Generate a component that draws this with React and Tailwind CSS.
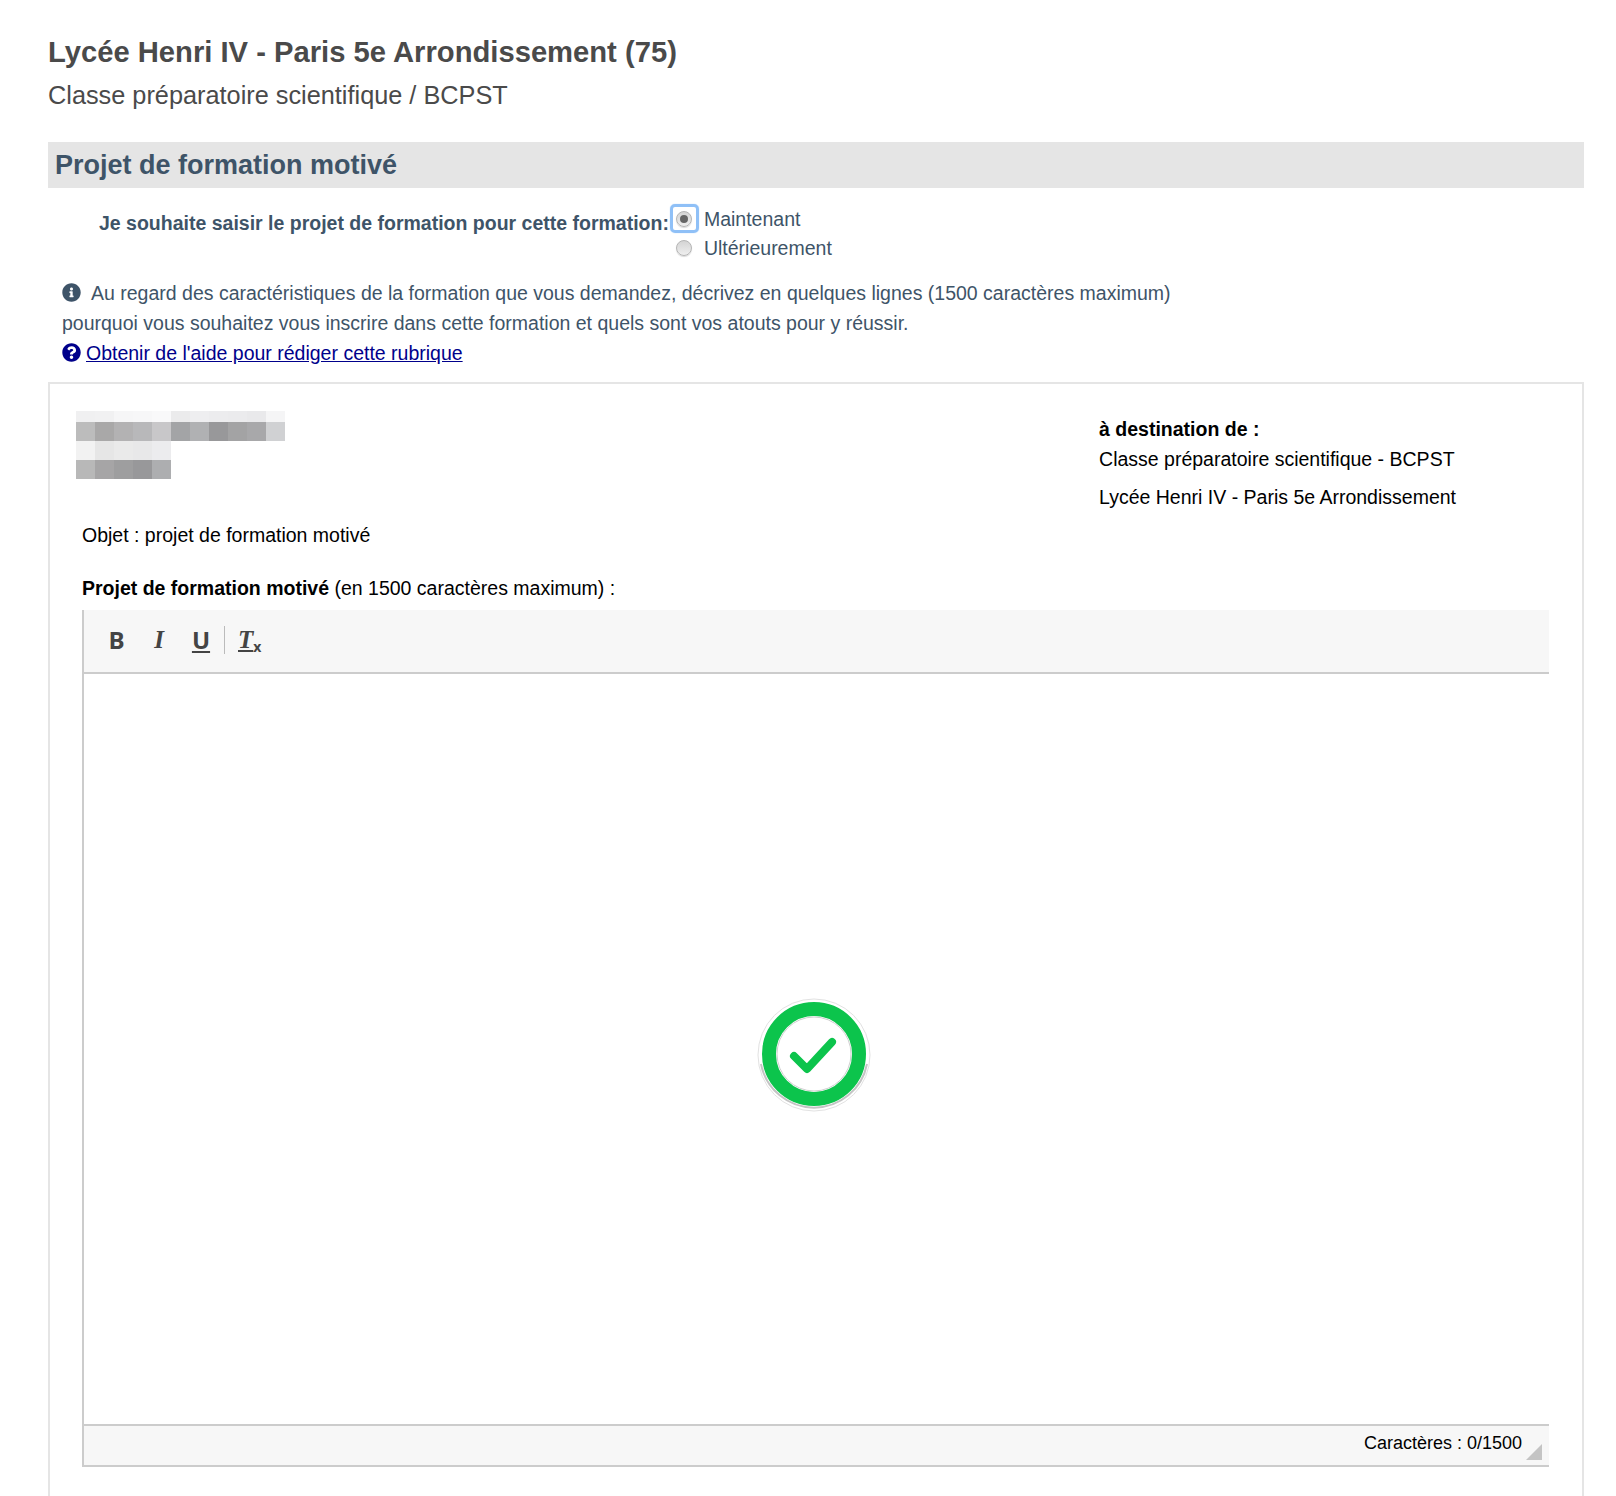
import React from 'react';
import { FaInfoCircle, FaQuestionCircle } from 'react-icons/fa';

const mosaicTop = ['#f0f0f1', '#f1f1f2', '#f6f6f7', '#f7f7f8', '#f9f9fa', '#ebebec', '#eeeef0', '#ececee', '#ebebed', '#e9e9eb', '#f5f5f6'];
const mosaicUpper = ['#bcbcbc', '#a9a8a8', '#b3b2b3', '#b8b8ba', '#c8c7c9', '#a3a4a6', '#b0b1b3', '#98989a', '#a3a3a4', '#a8a8aa', '#d0d1d3'];
const mosaicLight = ['#f2f2f2', '#e6e6e6', '#eaeaea', '#e8e8e9', '#ececee'];
const mosaicLower = ['#b8b8b8', '#a6a5a6', '#9e9e9f', '#98989a', '#adaeb0'];

function MosaicRow({ colors, height }) {
  return (
    <div className={`flex ${height}`}>
      {colors.map((c, i) => (
        <div key={i} className="w-[19px]" style={{ backgroundColor: c }} />
      ))}
    </div>
  );
}

function Radio({ checked }) {
  return (
    <span className="flex h-4 w-4 items-center justify-center rounded-full border border-[#b5b5b5] bg-gradient-to-b from-[#d4d4d4] to-[#efefef] shadow-[0_1px_1px_rgba(0,0,0,0.15)]">
      {checked && <span className="h-2 w-2 rounded-full bg-[#666]" />}
    </span>
  );
}

function SuccessBadge() {
  return (
    <svg width="116" height="116" viewBox="0 0 116 116" className="absolute left-[672px] top-[388px]">
      <circle cx="58" cy="57" r="56" fill="#fff" stroke="#e2e2e2" strokeWidth="1" />
      <path d="M 5 66 A 54 54 0 0 0 111 66" fill="none" stroke="#c4c4c4" strokeWidth="2" />
      <circle cx="58" cy="56" r="45" fill="none" stroke="#0cc44c" strokeWidth="14" />
      <circle cx="58" cy="56" r="37" fill="none" stroke="#cfcfcf" strokeWidth="1" />
      <path d="M 38 58 L 51 71 L 76 44" fill="none" stroke="#0cc44c" strokeWidth="8" strokeLinecap="round" strokeLinejoin="round" />
    </svg>
  );
}

export default function App() {
  return (
    <div className="h-[1496px] overflow-hidden bg-white pl-[48px] pr-[32px] pt-[33px] font-['Liberation_Sans',Arial,sans-serif]">
      <h1 className="text-[29.2px] font-bold leading-[38px] text-[#4a4a4a]">Lycée Henri IV - Paris 5e Arrondissement (75)</h1>
      <h2 className="mt-[7px] text-[25.3px] leading-[34px] text-[#4a4a4a]">Classe préparatoire scientifique / BCPST</h2>

      <div className="mt-[30px] flex h-[46px] items-center bg-[#e5e5e5] pl-[7px]">
        <h3 className="text-[27px] font-bold text-[#3e5468]">Projet de formation motivé</h3>
      </div>

      <div className="mt-[16px] flex items-start pl-[51px] text-[19.5px] text-[#3e5468]">
        <label className="mt-[7px] font-bold leading-[24px]">Je souhaite saisir le projet de formation pour cette formation:</label>
        <div className="flex flex-col">
          <div className="flex h-[29px] items-center">
            <span className="ml-[1px] flex h-[29px] w-[29px] items-center justify-center rounded-[5px] border-[3px] border-[#8fc0f7] shadow-[0_0_1px_#8fc0f7]">
              <Radio checked />
            </span>
            <span className="ml-[5px] mt-[2px]">Maintenant</span>
          </div>
          <div className="flex h-[30px] items-center">
            <span className="ml-[1px] flex h-[29px] w-[29px] items-center justify-center">
              <Radio />
            </span>
            <span className="ml-[5px] mt-[2px]">Ultérieurement</span>
          </div>
        </div>
      </div>

      <div className="mt-[15px] pl-[14px] text-[19.5px] leading-[30px] text-[#3e5468]">
        <p>
          <FaInfoCircle className="mr-[10px] inline-block align-[-2px] text-[19px]" />
          Au regard des caractéristiques de la formation que vous demandez, décrivez en quelques lignes (1500 caractères maximum)
        </p>
        <p>pourquoi vous souhaitez vous inscrire dans cette formation et quels sont vos atouts pour y réussir.</p>
        <a href="#aide" className="text-[#00008b] underline">
          <FaQuestionCircle className="mr-[5px] inline-block align-[-2px] text-[19px]" />
          Obtenir de l'aide pour rédiger cette rubrique
        </a>
      </div>

      <div className="relative mt-[14px] h-[1200px] border-2 border-[#e5e5e5] pl-[26px] pr-[33px] pt-[27px] text-[19.5px] text-black">
        <div className="flex justify-between">
          <div>
            <MosaicRow colors={mosaicTop} height="h-[11px]" />
            <MosaicRow colors={mosaicUpper} height="h-[19px]" />
            <MosaicRow colors={mosaicLight} height="h-[19px]" />
            <MosaicRow colors={mosaicLower} height="h-[19px]" />
          </div>
          <div className="mr-[93px] pt-[3px]">
            <p className="font-bold leading-[30px]">à destination de :</p>
            <p className="leading-[30px]">Classe préparatoire scientifique - BCPST</p>
            <p className="mt-[8px] leading-[30px]">Lycée Henri IV - Paris 5e Arrondissement</p>
          </div>
        </div>

        <p className="mt-[8px] pl-[6px] leading-[30px]">Objet : projet de formation motivé</p>
        <p className="mt-[23px] pl-[6px] leading-[30px]">
          <strong>Projet de formation motivé</strong> (en 1500 caractères maximum) :
        </p>

        <div className="relative mt-[7px] ml-[6px] flex h-[857px] flex-col border-b-2 border-l-2 border-[#cccccc]">
          <div className="flex h-[64px] shrink-0 items-center border-b-2 border-[#cccccc] bg-[#f7f7f7] pb-[2px] pl-[12px] text-[#444]">
            <span className="w-[41px] text-center font-['Open_Sans',sans-serif] text-[24px] font-bold">B</span>
            <span className="w-[44px] text-center font-['Liberation_Serif',serif] text-[25px] font-bold italic">I</span>
            <span className="w-[40px] text-center font-['Open_Sans',sans-serif] text-[24px] font-bold underline">U</span>
            <span className="ml-[3px] mr-[13px] h-[28px] w-[1px] bg-[#bbb]" />
            <span className="font-['Liberation_Serif',serif] text-[25px] font-bold italic underline">T</span>
            <span className="mt-[12px] font-['Open_Sans',sans-serif] text-[14px] font-bold">x</span>
          </div>
          <div className="flex-1" />
          <div className="relative flex h-[41px] shrink-0 items-center justify-end border-t-2 border-[#cccccc] bg-[#f7f7f7] pb-[5px] pr-[27px] text-[18px]">
            Caractères : 0/1500
            <svg width="16" height="16" viewBox="0 0 16 16" className="absolute bottom-[5px] right-[7px]">
              <polygon points="16,0 16,16 0,16" fill="#c4c4c4" />
            </svg>
          </div>
          <SuccessBadge />
        </div>
      </div>
    </div>
  );
}
